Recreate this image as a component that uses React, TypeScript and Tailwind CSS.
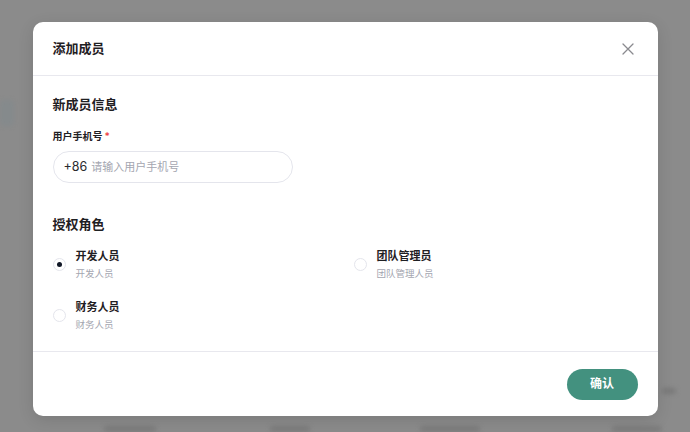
import { useState } from "react"

const font = { fontFamily: 'Inter, "Noto Sans CJK SC", sans-serif' }

const roles = [
  { id: "dev", title: "开发人员", desc: "开发人员" },
  { id: "admin", title: "团队管理员", desc: "团队管理人员" },
  { id: "finance", title: "财务人员", desc: "财务人员" },
]

function Radio({ checked }: { checked: boolean }) {
  return (
    <span className="flex h-[13px] w-[13px] flex-shrink-0 items-center justify-center rounded-full border border-[#e4e5ec] bg-white">
      {checked && <span className="h-[5px] w-[5px] rounded-full bg-[#111827]" />}
    </span>
  )
}

export default function App() {
  const [role, setRole] = useState("dev")

  return (
    <div className="relative h-[432px] w-full overflow-hidden bg-[#8b8b8b]" style={font}>
      {/* dimmed page behind the overlay */}
      <div className="absolute inset-0 blur-[2px]">
        <div className="absolute left-0 top-[100px] h-[26px] w-[14px] rounded bg-[#858a8c]" />
        <div className="absolute left-[104px] top-[426px] h-[6px] w-[52px] rounded bg-[#7c7c7c]" />
        <div className="absolute left-[270px] top-[426px] h-[6px] w-[40px] rounded bg-[#7c7c7c]" />
        <div className="absolute left-[420px] top-[426px] h-[6px] w-[60px] rounded bg-[#7c7c7c]" />
        <div className="absolute left-[612px] top-[426px] h-[6px] w-[50px] rounded bg-[#7c7c7c]" />
        <div className="absolute left-[662px] top-[388px] h-[6px] w-[14px] rounded bg-[#7a7a7a]" />
      </div>

      <div className="relative flex justify-center pt-[22px]">
        <div className="w-[625px] overflow-hidden rounded-[10px] bg-white shadow-[0_4px_16px_rgba(0,0,0,0.12)]">
          {/* header */}
          <div className="flex h-[54px] items-center justify-between border-b border-[#e8e8ee] px-5">
            <h2 className="text-[13px] font-bold text-[#1f2023]">添加成员</h2>
            <button className="mr-[2px] flex h-4 w-4 items-center justify-center text-[#8a8a8f]">
              <svg width="12" height="12" viewBox="0 0 12 12" fill="none" stroke="currentColor" strokeWidth="1.3" strokeLinecap="round">
                <path d="M1 1l10 10M11 1L1 11" />
              </svg>
            </button>
          </div>

          {/* body */}
          <div className="border-b border-[#e8e8ee] px-5 pb-[19px] pt-[18px]">
            <h3 className="text-[13px] font-bold leading-5 text-[#1f2023]">新成员信息</h3>
            <label className="mt-[14px] block text-[10px] font-semibold leading-4 text-[#1f2023]">
              用户手机号<span className="ml-[2px] text-[#ef4444]">*</span>
            </label>
            <div className="mt-[7px] flex h-[32px] w-[240px] items-center rounded-full border border-[#e4e5ec] px-[10px]">
              <span className="text-[12.5px] text-[#2a2a2e]">+86</span>
              <input
                className="ml-[4px] w-full bg-transparent text-[11px] text-[#2a2a2e] outline-none placeholder:text-[#a4a6b0]"
                placeholder="请输入用户手机号"
              />
            </div>

            <h3 className="mt-[31px] text-[13px] font-bold leading-5 text-[#1f2023]">授权角色</h3>
            <div className="mt-[14px] grid grid-cols-[301px_1fr] gap-y-[18px]">
              {roles.map((r) => (
                <button key={r.id} onClick={() => setRole(r.id)} className="flex items-center gap-[10px] text-left">
                  <Radio checked={role === r.id} />
                  <div>
                    <div className="text-[11px] font-semibold leading-4 text-[#1f2023]">{r.title}</div>
                    <div className="mt-[3px] text-[9.5px] leading-[14px] text-[#a4a6b0]">{r.desc}</div>
                  </div>
                </button>
              ))}
            </div>
          </div>

          {/* footer */}
          <div className="flex h-[64px] items-center justify-end px-5">
            <button className="h-[31px] w-[71px] rounded-full bg-[#43917f] text-[12px] font-bold text-white">确认</button>
          </div>
        </div>
      </div>
    </div>
  )
}
